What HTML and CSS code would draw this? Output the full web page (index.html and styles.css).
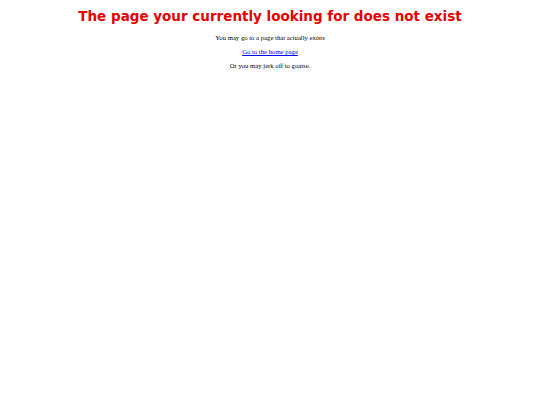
FILE: index.html
```html
<!DOCTYPE html>
<html>
<head>
<meta charset="utf-8">
<link rel="stylesheet" href="styles.css">
</head>
<body>
<div class="page">
<h1 class="title">The page your currently looking for does not exist</h1>
<p class="line">You may go to a page that actually exists</p>
<p class="line"><a class="link" href="#">Go to the home page</a></p>
<p class="line">Or you may jerk off to goatse.</p>
</div>
</body>
</html>
```
FILE: styles.css
```css
html, body { margin: 0; padding: 0; background: #fff; }
.page { padding-top: 7px; text-align: center; }
.title {
  font-family: "DejaVu Sans", sans-serif;
  font-weight: bold;
  font-size: 13.5px;
  color: #e60000;
  margin: 0 0 9px 0;
  line-height: 18px;
}
.line {
  font-family: "Liberation Serif", serif;
  font-size: 6.7px;
  color: #000;
  margin: 0 0 6px 0;
  line-height: 8px;
}
.link { color: #0000ee; }
```
